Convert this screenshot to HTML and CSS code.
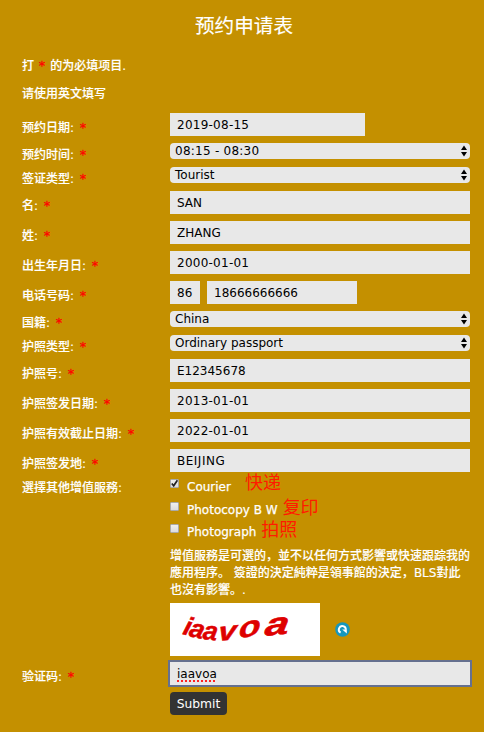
FILE: index.html
```html
<!DOCTYPE html>
<html lang="zh-CN">
<head>
<meta charset="utf-8">
<title>预约申请表</title>
<link rel="stylesheet" href="styles.css">
</head>
<body>
<form class="form">
  <h1 class="title">预约申请表</h1>
  <p class="intro">打 <span class="req">*</span> 的为必填项目.</p>
  <p class="intro">请使用英文填写</p>

  <div class="row"><label>预约日期: <span class="req">*</span></label><div class="field date num">2019-08-15</div></div>
  <div class="row short"><label>预约时间: <span class="req">*</span></label><div class="select num">08:15 - 08:30<svg class="arrows" viewBox="0 0 6 12"><path d="M0 5L3 0.5L6 5ZM0 7L3 11.5L6 7Z"/></svg></div></div>
  <div class="row short"><label>签证类型: <span class="req">*</span></label><div class="select">Tourist<svg class="arrows" viewBox="0 0 6 12"><path d="M0 5L3 0.5L6 5ZM0 7L3 11.5L6 7Z"/></svg></div></div>
  <div class="row"><label>名: <span class="req">*</span></label><div class="field">SAN</div></div>
  <div class="row"><label>姓: <span class="req">*</span></label><div class="field">ZHANG</div></div>
  <div class="row"><label>出生年月日: <span class="req">*</span></label><div class="field num">2000-01-01</div></div>
  <div class="row"><label>电话号码: <span class="req">*</span></label><div class="phone"><div class="field code">86</div><div class="field number">18666666666</div></div></div>
  <div class="row short"><label>国籍: <span class="req">*</span></label><div class="select">China<svg class="arrows" viewBox="0 0 6 12"><path d="M0 5L3 0.5L6 5ZM0 7L3 11.5L6 7Z"/></svg></div></div>
  <div class="row short"><label>护照类型: <span class="req">*</span></label><div class="select">Ordinary passport<svg class="arrows" viewBox="0 0 6 12"><path d="M0 5L3 0.5L6 5ZM0 7L3 11.5L6 7Z"/></svg></div></div>
  <div class="row"><label>护照号: <span class="req">*</span></label><div class="field">E12345678</div></div>
  <div class="row"><label>护照签发日期: <span class="req">*</span></label><div class="field num">2013-01-01</div></div>
  <div class="row"><label>护照有效截止日期: <span class="req">*</span></label><div class="field num">2022-01-01</div></div>
  <div class="row"><label>护照签发地: <span class="req">*</span></label><div class="field city">BEIJING</div></div>

  <div class="row services">
    <label class="tc">選擇其他增值服務:</label>
    <div class="options">
      <div class="option first"><span class="box"><svg viewBox="0 0 9 9"><path d="M1.8 4.5L3.7 6.8L7.4 1.2" fill="none" stroke="#222" stroke-width="1.7"/></svg></span><span class="name">Courier</span><span class="mark wide">快递</span></div>
      <div class="option"><span class="box"></span><span class="name">Photocopy B W</span><span class="mark">复印</span></div>
      <div class="option"><span class="box"></span><span class="name">Photograph</span><span class="mark">拍照</span></div>
    </div>
  </div>

  <div class="side">
    <p class="note tc">增值服務是可選的<span class="sc">，</span>並不以任何方式影響或快速跟踪我的<br>應用程序<span class="sc">。</span> 簽證的決定純粹是領事館的決定<span class="sc">，</span>BLS對此<br>也沒有影響<span class="sc">。</span>.</p>
    <div class="captcha">
      <svg class="code-image" viewBox="0 0 150 53">
        <g class="glyphs">
          <text transform="translate(12 31) rotate(14) skewX(-2)">i</text>
          <text transform="translate(18 33) rotate(12) skewX(-4)">a</text>
          <text transform="translate(32 36) rotate(6) skewX(-4)">a</text>
          <text transform="translate(48 38) rotate(-6) skewX(-10) scale(1.25 1)">v</text>
          <text transform="translate(69 36) rotate(-14) skewX(-14) scale(1.4 1.05)">o</text>
          <text transform="translate(94 33) rotate(-6) skewX(-14) scale(1.65 1.2)">a</text>
        </g>
      </svg>
      <svg class="refresh" viewBox="0 0 15 15"><circle cx="7.5" cy="7.5" r="7.3" fill="#1597bd"/><path d="M5.6 10.6A3.5 3.5 0 1 1 10.8 7.8" fill="none" stroke="#fff" stroke-width="1.9"/><path d="M7.2 7.4H11.8V11.6Z" fill="#fff"/></svg>
    </div>
  </div>

  <div class="row"><label>验证码: <span class="req">*</span></label><div class="field focused"><span class="typo">iaavoa</span></div></div>
  <div class="side"><button class="submit" type="button">Submit</button></div>
</form>
</body>
</html>
```
FILE: styles.css
```css
* { box-sizing: border-box; }
body {
  margin: 0;
  background: #c49000;
  color: #fff;
  font: 500 12px/17px "DejaVu Sans", "Noto Sans CJK SC", sans-serif;
}
.form { height: 732px; padding: 13px 14px 0 22px; }
.title { margin: 0 0 17px; padding-right: 5px; padding-left: 1px; text-align: center; font-size: 19.6px; font-weight: 400; line-height: 28px; -webkit-text-stroke: 0.15px #fff; }
.intro { margin: 0; height: 28px; line-height: 17px; -webkit-text-stroke: 0.15px #fff; }
.intro + .intro { height: 27px; }
.req { color: #f00; margin-left: 2px; font-size: 13px; line-height: 0; -webkit-text-stroke: 0.3px #f00; }
.intro .req { margin: 0 1px; }
.row { display: grid; grid-template-columns: 148px 300px; height: 30px; align-items: start; }
.row > label { padding-top: 7px; white-space: nowrap; -webkit-text-stroke: 0.15px #fff; }
.short { height: 24px; }
.short > label { padding-top: 4px; }
.field { height: 23px; padding: 1px 7px 0; background: #e8e8e8; color: #000; line-height: 23px; }
.num { letter-spacing: 0.25px; }
.date { width: 195px; }
.city { letter-spacing: 0.5px; }
.phone { display: flex; gap: 7px; }
.code { width: 30px; }
.number { width: 150px; }
.select { display: flex; justify-content: space-between; align-items: center; height: 16px; padding: 0 3px 0 5px; border-radius: 4px; background: #e8e8e8; color: #000; line-height: 16px; }
.arrows { width: 6px; height: 12px; }
.tc { font-family: "DejaVu Sans", "Noto Sans CJK TC", sans-serif; }
.sc { font-family: "Noto Sans CJK SC", sans-serif; line-height: 0; }
.services { height: 68px; }
.services > label { padding-top: 1px; }
.option { display: flex; height: 22px; align-items: flex-start; }
.option.first { height: 23px; }
.box { width: 9px; height: 9px; margin: 0 8px 0 0; border: 1px solid #aaa; border-radius: 1px; background: linear-gradient(#eee, #ddd); display: flex; }
.box svg { width: 9px; height: 9px; margin: -1px; flex: none; }
.name { -webkit-text-stroke: 0.25px #fff; }
.mark { color: #ff1b00; font: 400 18px/18px "Noto Sans CJK SC", sans-serif; margin: -5px 0 0 5px; }
.wide { margin: -7px 0 0 14px; }
.side { padding-left: 148px; }
.note { margin: 0; padding-top: 1px; white-space: nowrap; -webkit-text-stroke: 0.15px #fff; }
.captcha { display: flex; align-items: center; gap: 15px; height: 53px; margin: 4px 0 6px; }
.code-image { width: 150px; height: 53px; background: #fff; }
.glyphs { font: bold italic 26px "Liberation Sans", sans-serif; fill: #de0000; stroke: #de0000; stroke-width: 0.5px; }
.refresh { width: 15px; height: 15px; }
.focused { outline: 2px solid #65708f; }
.typo { text-decoration: underline dotted #f22 1.5px; text-underline-offset: 2px; }
.submit { display: block; width: 57px; height: 23px; padding: 0; border: 0; border-radius: 4px; background: #333; color: #fff; font: 12.3px "DejaVu Sans", sans-serif; }
```
